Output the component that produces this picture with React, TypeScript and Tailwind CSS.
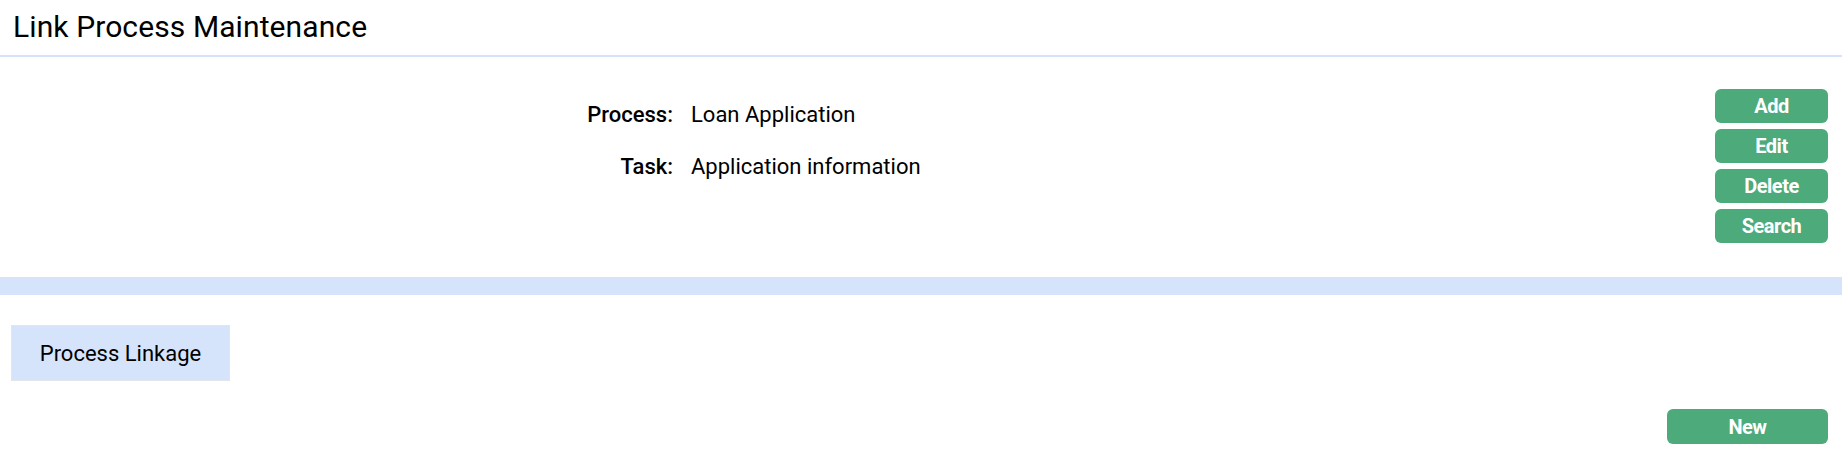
import React from 'react';

const actions = ['Add', 'Edit', 'Delete', 'Search'];

const fields = [
  { label: 'Process:', value: 'Loan Application' },
  { label: 'Task:', value: 'Application information' },
];

export default function App() {
  return (
    <div className="min-h-screen bg-white text-black" style={{ fontFamily: 'Roboto, "Noto Sans", sans-serif' }}>
      {/* Header */}
      <header className="h-[57px] border-b-2 border-[#d6e4fb] pl-[13px] pt-[9px]">
        <h1 className="text-[30px] leading-[36px] tracking-[0.1px]">Link Process Maintenance</h1>
      </header>

      {/* Form */}
      <section className="flex h-[220px] justify-between pr-[14px] pt-[32px]">
        <div className="ml-[560px] flex flex-col gap-[20px] pt-[10px]">
          {fields.map((f) => (
            <div key={f.label} className="flex items-center text-[22px] leading-[32px]">
              <span className="w-[113px] text-right font-medium">{f.label}</span>
              <span className="ml-[18px]">{f.value}</span>
            </div>
          ))}
        </div>
        <div className="flex flex-col gap-[6px]">
          {actions.map((a) => (
            <button
              key={a}
              className="h-[34px] w-[113px] rounded-[6px] bg-[#4caa7b] text-[20px] font-bold tracking-[-0.5px] text-white"
            >
              {a}
            </button>
          ))}
        </div>
      </section>

      <div className="h-[18px] bg-[#d6e4fb]" />

      {/* Tabs */}
      <div className="px-[11px] pt-[30px]">
        <div className="flex h-[56px] w-[219px] items-center justify-center border border-[#e2e5ea] bg-[#d6e4fb] text-[22px]">
          Process Linkage
        </div>
      </div>

      <div className="flex justify-end pr-[14px] pt-[28px]">
        <button className="h-[35px] w-[161px] rounded-[6px] bg-[#4caa7b] text-[20px] font-bold tracking-[-0.5px] text-white">
          New
        </button>
      </div>
    </div>
  );
}
